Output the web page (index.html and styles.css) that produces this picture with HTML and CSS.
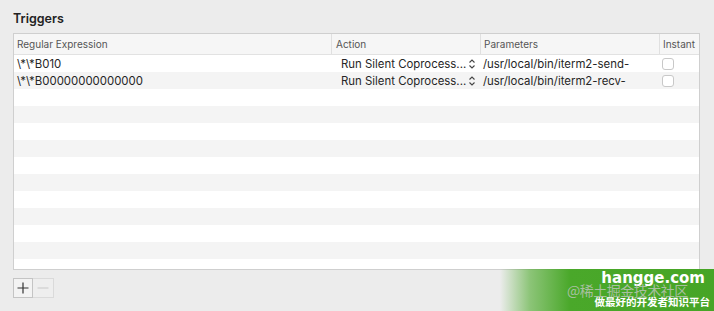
FILE: index.html
```html
<!DOCTYPE html>
<html>
<head>
<meta charset="utf-8">
<link rel="stylesheet" href="styles.css">
</head>
<body>
<div class="panel">
  <div class="title">Triggers</div>
  <div class="table">
    <div class="row head">
      <div class="c c1">Regular Expression</div>
      <div class="c c2">Action</div>
      <div class="c c3">Parameters</div>
      <div class="c c4">Instant</div>
    </div>
    <div class="row">
      <div class="c c1">\*\*B010</div>
      <div class="c c2"><span class="act">Run Silent Coprocess...</span><svg class="step" width="8" height="12" viewBox="0 0 8 12"><path d="M1.5 4.5L4 2L6.5 4.5M1.5 7.5L4 10L6.5 7.5" fill="none" stroke="#444" stroke-width="1.1"/></svg></div>
      <div class="c c3">/usr/local/bin/iterm2-send-</div>
      <div class="c c4"><span class="chk"></span></div>
    </div>
    <div class="row alt">
      <div class="c c1">\*\*B00000000000000</div>
      <div class="c c2"><span class="act">Run Silent Coprocess...</span><svg class="step" width="8" height="12" viewBox="0 0 8 12"><path d="M1.5 4.5L4 2L6.5 4.5M1.5 7.5L4 10L6.5 7.5" fill="none" stroke="#444" stroke-width="1.1"/></svg></div>
      <div class="c c3">/usr/local/bin/iterm2-recv-</div>
      <div class="c c4"><span class="chk"></span></div>
    </div>
    <div class="row"></div>
    <div class="row alt"></div>
    <div class="row"></div>
    <div class="row alt"></div>
    <div class="row"></div>
    <div class="row alt"></div>
    <div class="row"></div>
    <div class="row alt"></div>
    <div class="row"></div>
    <div class="row alt last"></div>
  </div>
  <div class="buttons">
    <div class="btn plus"><svg width="12" height="12" viewBox="0 0 12 12"><path d="M6 0.5V11.5M0.5 6H11.5" stroke="#333" stroke-width="1.2"/></svg></div>
    <div class="btn minus"><svg width="12" height="12" viewBox="0 0 12 12"><path d="M0.5 6H11.5" stroke="#cfcfcf" stroke-width="1.2"/></svg></div>
  </div>
</div>
<div class="wm">
  <div class="wm-site">hangge.com</div>
  <div class="wm-juejin">@稀土掘金技术社区</div>
  <div class="wm-slogan">做最好的开发者知识平台</div>
</div>
</body>
</html>
```
FILE: styles.css
```css
html, body { margin: 0; padding: 0; }
body {
  width: 714px;
  height: 311px;
  background: #ececec;
  font-family: Inter, "Noto Sans", "Noto Sans CJK SC", sans-serif;
  position: relative;
  overflow: hidden;
}
.panel { padding: 11px 14px 0 13px; }
.title {
  font-size: 12.5px;
  font-weight: 600;
  color: #222;
  height: 22px;
  line-height: 16px;
}
.table {
  width: 685px;
  height: 235px;
  border: 1px solid #cfcfcf;
  background: #fff;
  overflow: hidden;
}
.row {
  display: flex;
  height: 17px;
  align-items: center;
  font-size: 11.4px;
  color: #262626;
}
.row.alt { background: #f4f4f4; }
.row.head {
  height: 20px;
  background: #f6f6f6;
  border-bottom: 1px solid #e2e2e2;
  font-size: 10px;
  color: #555;
}
.c { box-sizing: border-box; white-space: nowrap; overflow: hidden; display: flex; align-items: center; height: 100%; }
.c1 { width: 317px; padding-left: 3px; }
.c2 { width: 149px; padding-left: 10px; }
.c3 { width: 179px; padding-left: 3px; }
.c4 { width: 40px; padding-left: 2px; }
.head .c2, .head .c3, .head .c4 { border-left: 1px solid #e0e0e0; }
.head .c2 { padding-left: 4px; }
.head .c3 { padding-left: 3px; }
.head .c4 { padding-left: 3px; }
.step { margin-left: 2px; flex: none; }
.chk {
  display: block;
  width: 12px;
  height: 12px;
  border: 1px solid #c8c8c8;
  border-radius: 3px;
  background: #fff;
  margin-left: 1px;
  box-sizing: border-box;
}
.buttons { display: flex; margin-top: 8px; }
.btn {
  width: 20px;
  height: 20px;
  box-sizing: border-box;
  display: flex;
  align-items: center;
  justify-content: center;
}
.plus { border: 1px solid #c4c4c4; background: #f3f3f3; }
.minus { border: 1px solid #dadada; border-left: none; background: #eeeeee; width: 21px; }
.wm {
  position: absolute;
  left: 500px;
  top: 269px;
  width: 214px;
  height: 42px;
  background: linear-gradient(to right, rgba(76,170,42,0) 0px, rgba(76,170,42,0.6) 30px, #4aa82a 70px, #46a526 214px);
}
.wm-site {
  position: absolute;
  right: 9px;
  top: 3px;
  color: #fff;
  font-family: "DejaVu Sans", sans-serif;
  font-weight: bold;
  font-size: 15px;
  line-height: 13px;
}
.wm-juejin {
  position: absolute;
  left: 67px;
  top: 17px;
  color: rgba(200,200,200,0.75);
  font-family: "Noto Sans CJK SC", sans-serif;
  font-size: 14px;
  line-height: 9px;
  letter-spacing: -0.5px;
}
.wm-slogan {
  position: absolute;
  right: 4px;
  top: 27px;
  color: #fff;
  font-family: "Noto Sans CJK SC", sans-serif;
  font-weight: bold;
  font-size: 10.5px;
  line-height: 11px;
}
```
